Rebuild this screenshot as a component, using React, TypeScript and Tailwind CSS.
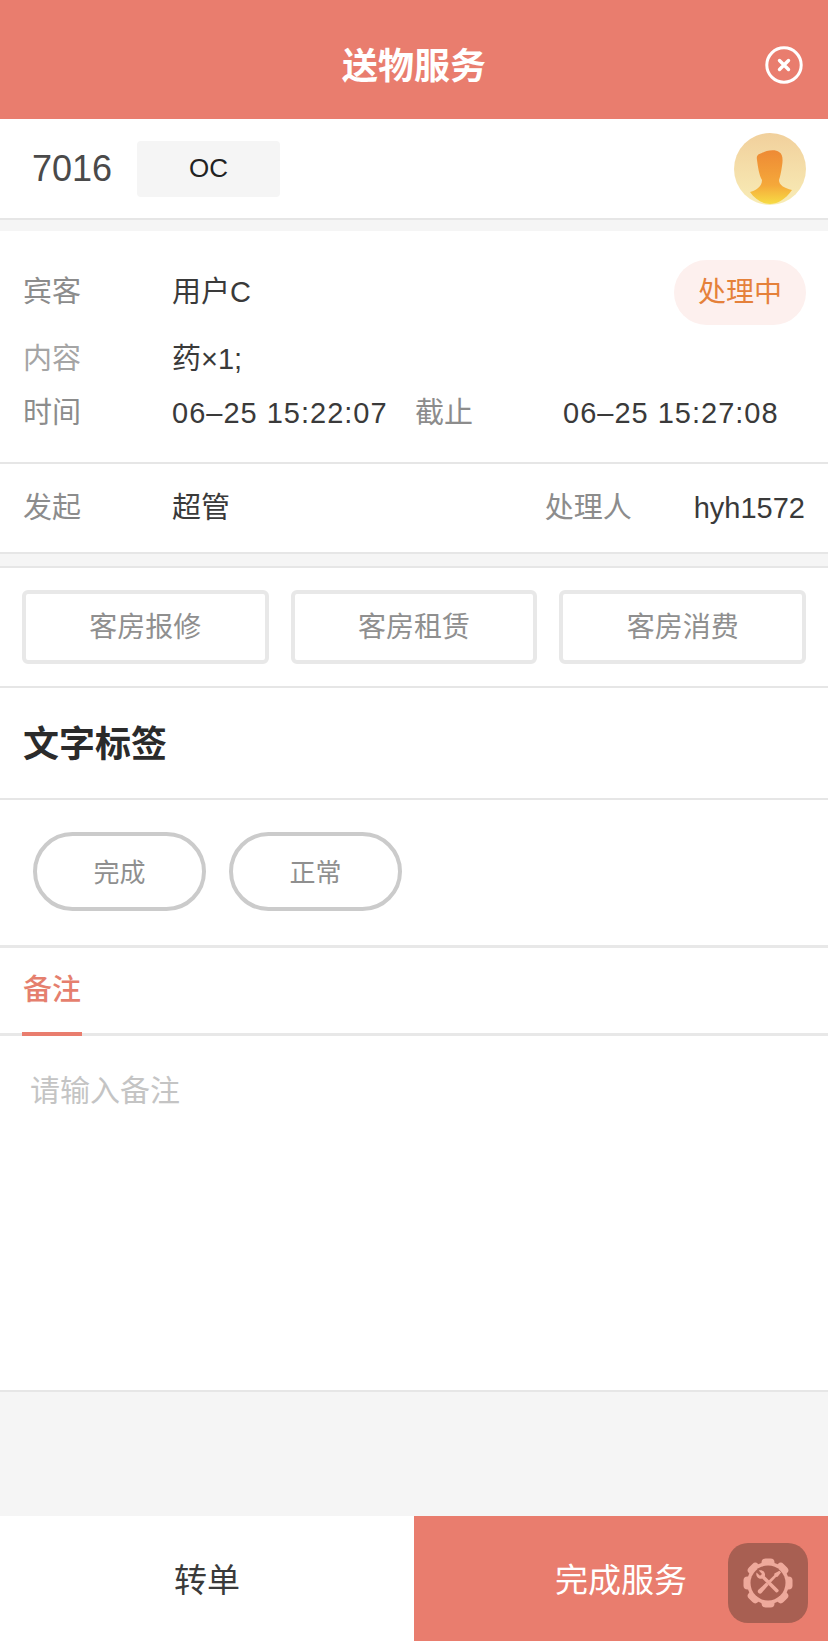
import React from 'react';

const FONT = '[font-family:"Liberation_Sans","Noto_Sans_CJK_SC",sans-serif]';

const ActionButton = ({ label }: { label: string }) => (
  <button className="h-[74px] flex-1 rounded-[6px] border-[4px] border-[#e8e8e8] bg-white pt-[1px] text-[28px] text-[#8f8f8f]">
    {label}
  </button>
);

const TagPill = ({ label }: { label: string }) => (
  <div className="flex h-[79px] w-[173px] items-center justify-center rounded-full border-[4px] border-[#cbcbcb] pt-[3px] text-[26px] text-[#8f8f8f]">
    {label}
  </div>
);

const Avatar = () => (
  <svg width="72" height="72" viewBox="0 0 72 72">
    <defs>
      <linearGradient id="avatarBg" x1="0" y1="0" x2="0" y2="1">
        <stop offset="0" stopColor="#f1d09c" />
        <stop offset="1" stopColor="#f8ecb6" />
      </linearGradient>
      <linearGradient id="avatarFg" x1="0" y1="0" x2="0" y2="1">
        <stop offset="0" stopColor="#ee8a35" />
        <stop offset="0.65" stopColor="#f5a83a" />
        <stop offset="1" stopColor="#f7dc45" />
      </linearGradient>
    </defs>
    <circle cx="36" cy="36" r="36" fill="url(#avatarBg)" />
    <path
      d="M23 27 C22 22 25 21 28 20 C32 17 42 16 45 19 C49 21 49 27 48 33 C47 40 46 44 45 47 C45 52 50 55 58 57 C51 67 43 71 36 71 C28 71 21 66 16 59 C23 57 28 53 28 47 C25 42 24 34 23 27 Z"
      fill="url(#avatarFg)"
    />
  </svg>
);

const CloseIcon = () => (
  <svg width="38" height="38" viewBox="0 0 38 38" fill="none" stroke="#fff">
    <circle cx="19" cy="19" r="17.2" strokeWidth="3" />
    <path d="M14.5 14.5 L23.5 23.5 M23.5 14.5 L14.5 23.5" strokeWidth="3.4" strokeLinecap="round" />
  </svg>
);

const ToolBadge = () => {
  const teeth = [0, 45, 90, 135, 180, 225, 270, 315];
  return (
    <div className="absolute right-[20px] bottom-[18px] flex h-[80px] w-[80px] items-center justify-center rounded-[20px] bg-[#a85f52]">
      <svg width="52" height="52" viewBox="0 0 52 52">
        {teeth.map((deg) => (
          <rect key={deg} x="19.5" y="1.5" width="13" height="10" rx="4" fill="#eea99b" transform={`rotate(${deg} 26 26)`} />
        ))}
        <circle cx="26" cy="26" r="21" fill="#eea99b" />
        <circle cx="26" cy="26" r="17.5" fill="#a85f52" />
        {/* wrench */}
        <path
          d="M14.5 15.5 L18 18.8 L20 17 L16.8 13.6 C19.5 12.6 22.6 14.2 23 17.2 C23.1 18 23 18.7 22.8 19.2 L36.2 32.4 C37.8 34 35.2 36.6 33.6 35 L20.2 21.6 C17 22.6 13.4 19.5 14.5 15.5 Z"
          fill="#eea99b"
        />
        {/* screwdriver */}
        <path d="M37.4 13.8 L39 15.4 L35.6 19.8 L34 20 L28.8 25.4 L26.8 23.4 L32.2 18.2 L32.4 16.6 Z" fill="#eea99b" />
        <path d="M24.2 25.6 L26.6 28 L19.6 36 C17.6 38 14.2 34.8 16.4 32.8 Z" fill="#eea99b" />
      </svg>
    </div>
  );
};

export default function App() {
  return (
    <div className={`relative flex h-[1641px] w-[828px] flex-col overflow-hidden bg-[#f5f5f5] ${FONT}`}>
      <header className="flex h-[119px] shrink-0 items-center justify-center bg-[#e97d6e] pt-[14px]">
        <h1 className="text-[36px] font-bold text-white">送物服务</h1>
        <div className="absolute top-[46px] right-[25px] flex">
          <CloseIcon />
        </div>
      </header>

      <section className="flex h-[101px] shrink-0 items-center border-b-2 border-[#e6e6e6] bg-white pr-[22px] pl-[32px]">
        <span className="w-[105px] text-[36px] text-[#4a4a4a]">7016</span>
        <div className="flex h-[56px] w-[143px] items-center justify-center rounded-[4px] bg-[#f5f5f5] text-[26px] text-[#222]">
          OC
        </div>
        <div className="ml-auto flex">
          <Avatar />
        </div>
      </section>

      <div className="h-[11px] shrink-0" />

      <section className="relative h-[233px] shrink-0 border-b-2 border-[#e6e6e6] bg-white px-[23px] pt-[40px] text-[29px] text-[#3a3a3a]">
        <div className="flex h-[44px] items-center">
          <span className="w-[149px] text-[#8c8c8c]">宾客</span>
          <span>用户C</span>
        </div>
        <div className="mt-[23px] flex h-[44px] items-center">
          <span className="w-[149px] text-[#a5a5a5]">内容</span>
          <span>药×1;</span>
        </div>
        <div className="mt-[10px] flex h-[44px] items-center">
          <span className="w-[149px] text-[#8c8c8c]">时间</span>
          <span className="w-[243px] tracking-[1px] whitespace-nowrap">06–25 15:22:07</span>
          <span className="w-[148px] text-[#8c8c8c]">截止</span>
          <span className="tracking-[1px] whitespace-nowrap">06–25 15:27:08</span>
        </div>
        <div className="absolute top-[29px] right-[22px] flex h-[65px] w-[132px] items-center justify-center rounded-full bg-[#fdf0ee] pt-[1px] text-[28px] text-[#e5813a]">
          处理中
        </div>
      </section>

      <section className="flex h-[90px] shrink-0 items-center border-b-2 border-[#e6e6e6] bg-white px-[23px] pt-[1px] text-[29px] text-[#3a3a3a]">
        <span className="w-[149px] text-[#8c8c8c]">发起</span>
        <span>超管</span>
        <span className="ml-auto w-[149px] text-[#8c8c8c]">处理人</span>
        <span>hyh1572</span>
      </section>

      <div className="h-[12px] shrink-0" />

      <section className="flex h-[122px] shrink-0 items-center gap-[22px] border-y-2 border-[#e6e6e6] bg-white px-[22px]">
        <ActionButton label="客房报修" />
        <ActionButton label="客房租赁" />
        <ActionButton label="客房消费" />
      </section>

      <section className="flex h-[112px] shrink-0 items-center border-b-2 border-[#e6e6e6] bg-white px-[23px] pt-[3px]">
        <h2 className="text-[36px] font-bold text-[#2b2b2b]">文字标签</h2>
      </section>

      <section className="flex h-[145px] shrink-0 items-center gap-[23px] bg-white pb-[2px] pl-[33px]">
        <TagPill label="完成" />
        <TagPill label="正常" />
      </section>

      <section className="flex h-[91px] shrink-0 border-y-[3px] border-[#e8e8e8] bg-white px-[22px]">
        <div className="-mb-[3px] flex h-[88px] w-[60px] items-center justify-center border-b-[4px] border-[#e97d6e] pt-[2px] text-[29px] font-medium text-[#e57f6e]">
          备注
        </div>
      </section>

      <section className="h-[356px] shrink-0 border-b-2 border-[#e6e6e6] bg-white px-[30px] pt-[32px] text-[30px] text-[#c4c4c4]">
        请输入备注
      </section>

      <div className="flex-1" />

      <footer className="flex h-[125px] shrink-0 pt-[2px] text-[33px]">
        <button className="-mt-[2px] flex-1 bg-white pt-[4px] text-[#3a3a3a]">转单</button>
        <button className="-mt-[2px] flex-1 bg-[#e97d6e] pt-[4px] text-white">完成服务</button>
      </footer>

      <ToolBadge />
    </div>
  );
}
